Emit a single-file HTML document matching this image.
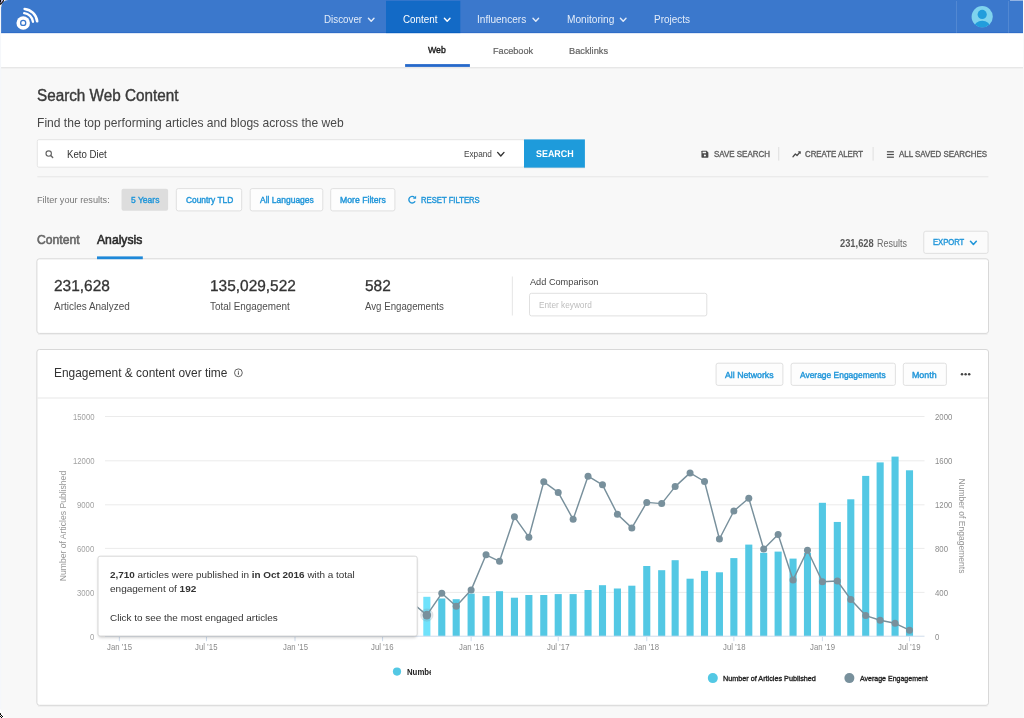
<!DOCTYPE html><html><head><meta charset="utf-8"><title>Search Web Content</title><style>

html,body{margin:0;padding:0;}
body{width:1024px;height:718px;overflow:hidden;background:#f8f8f8;font-family:"Liberation Sans",sans-serif;position:relative;}
.a{position:absolute;}
.t{position:absolute;white-space:nowrap;line-height:1;transform:translateY(-50%);transform-origin:0 50%;}
.t b{font-weight:700;}

</style></head><body>
<svg class="a" style="left:0;top:0" width="1024" height="718" viewBox="0 0 1024 718">
<defs><clipPath id="av"><circle cx="982.2" cy="16.7" r="10.6"/></clipPath><filter id="sh" x="-5%" y="-20%" width="110%" height="150%"><feGaussianBlur stdDeviation="1.6"/></filter></defs>
<rect x="0" y="0" width="1024" height="33.3" fill="#3b78cc"/>
<rect x="386" y="0.8" width="74.3" height="32.5" fill="#136ac6"/>
<rect x="0" y="32.1" width="1024" height="1.2" fill="#2f6cc8"/><rect x="386" y="32.1" width="74.3" height="1.2" fill="#0660c0"/>
<rect x="956.00" y="1.00" width="1" height="32.00" fill="rgba(255,255,255,0.12)"/>
<rect x="1008.00" y="1.00" width="1" height="32.00" fill="rgba(255,255,255,0.12)"/>
<rect x="0" y="67" width="1024" height="1" fill="#e7e7e7"/><rect x="0" y="68" width="1024" height="1" fill="#f1f1f1"/>
<rect x="0" y="33.3" width="1024" height="33.7" fill="#fff"/>
<rect x="405.1" y="64.1" width="64.8" height="2.8" fill="#2669ca"/>
<circle cx="23.2" cy="22.9" r="6.75" fill="#fff"/><circle cx="23.2" cy="22.9" r="2.55" fill="none" stroke="#3b78cc" stroke-width="1.3"/><path d="M24.2 13.15 A9.8 9.8 0 0 1 32.95 21.7" fill="none" stroke="#fff" stroke-width="2.4" stroke-linecap="round"/><path d="M24.66 8.98 A14 14 0 0 1 37.15 21.3" fill="none" stroke="#fff" stroke-width="2.6" stroke-linecap="round"/>
<circle cx="982.2" cy="16.7" r="10.6" fill="#7fd3ee"/><g clip-path="url(#av)"><circle cx="982.2" cy="14.4" r="4.6" fill="#229ddc"/><ellipse cx="982.2" cy="27.4" rx="8.2" ry="6.6" fill="#229ddc"/></g>
<path d="M368.40 18.20 L371.20 21.20 L374.00 18.20" fill="none" stroke="#e3ecf9" stroke-width="1.4" stroke-linecap="round" stroke-linejoin="round"/>
<path d="M444.40 18.20 L447.20 21.20 L450.00 18.20" fill="none" stroke="#fff" stroke-width="1.4" stroke-linecap="round" stroke-linejoin="round"/>
<path d="M533.00 18.20 L535.80 21.20 L538.60 18.20" fill="none" stroke="#e3ecf9" stroke-width="1.4" stroke-linecap="round" stroke-linejoin="round"/>
<path d="M620.40 18.20 L623.20 21.20 L626.00 18.20" fill="none" stroke="#e3ecf9" stroke-width="1.4" stroke-linecap="round" stroke-linejoin="round"/>
<rect x="37.30" y="139.70" width="487.20" height="27.50" rx="1.5" fill="#fff" stroke="#e2e2e2" stroke-width="0.9"/>
<rect x="524" y="167" width="61" height="1.3" fill="#d9dde0"/>
<rect x="524" y="139.4" width="60.9" height="28.2" fill="#1e9bdb"/>
<circle cx="48.7" cy="153.5" r="2.7" fill="none" stroke="#666" stroke-width="1.15"/><path d="M50.7 155.6 L52.7 157.6" stroke="#666" stroke-width="1.4" stroke-linecap="round"/>
<path d="M497.60 152.40 L500.80 156.00 L504.00 152.40" fill="none" stroke="#333" stroke-width="1.4" stroke-linecap="round" stroke-linejoin="round"/>
<g transform="translate(700.9,150.2) scale(0.89)"><path d="M0.6 1.3 Q0.6 0.6 1.3 0.6 L6.4 0.6 L8.4 2.6 L8.4 7.7 Q8.4 8.4 7.7 8.4 L1.3 8.4 Q0.6 8.4 0.6 7.7 Z" fill="#4a4a4a"/><rect x="1.9" y="1.7" width="3.9" height="1.7" fill="#f8f8f8"/><circle cx="4.5" cy="5.9" r="1.2" fill="#f8f8f8"/></g>
<g transform="translate(792.2,150.4) scale(0.88)"><path d="M0.9 7.2 L3.6 4.1 L5.5 5.8 L8.7 2.1" fill="none" stroke="#4a4a4a" stroke-width="1.4" stroke-linejoin="round" stroke-linecap="round"/><path d="M6.3 1.2 L9.7 1.0 L9.6 4.4 Z" fill="#4a4a4a"/></g>
<g transform="translate(886.6,150.3)"><rect x="0.3" y="0.9" width="7" height="1.2" fill="#4a4a4a"/><rect x="0.3" y="3.6" width="7" height="1.2" fill="#4a4a4a"/><rect x="0.3" y="6.3" width="7" height="1.2" fill="#4a4a4a"/></g>
<rect x="778.30" y="147.00" width="0.9" height="13.60" fill="#dcdcdc"/>
<rect x="872.65" y="147.00" width="0.9" height="13.60" fill="#dcdcdc"/>
<rect x="37.30" y="176.35" width="951.10" height="0.9" fill="#e4e4e4"/>
<rect x="121.50" y="188.70" width="46.60" height="22.10" rx="2" fill="#dddddd"/>
<rect x="176.30" y="188.60" width="65.40" height="22.30" rx="2" fill="#fdfdfd" stroke="#dcdcdc" stroke-width="0.9"/>
<rect x="250.20" y="188.60" width="72.60" height="22.30" rx="2" fill="#fdfdfd" stroke="#dcdcdc" stroke-width="0.9"/>
<rect x="330.70" y="188.60" width="64.20" height="22.30" rx="2" fill="#fdfdfd" stroke="#dcdcdc" stroke-width="0.9"/>
<g transform="translate(407.5,194.9)"><path d="M7.6 6.3 A3.3 3.3 0 1 1 7.0 2.5" fill="none" stroke="#2196d9" stroke-width="1.4"/><path d="M5.4 3.9 L8.6 3.9 L8.6 0.8 Z" fill="#2196d9"/></g>
<rect x="923.75" y="231.25" width="64.35" height="22.15" rx="2" fill="#fbfbfb" stroke="#dcdcdc" stroke-width="0.9"/>
<path d="M970.50 241.30 L973.40 244.50 L976.30 241.30" fill="none" stroke="#2196d9" stroke-width="1.6" stroke-linecap="round" stroke-linejoin="round"/>
<rect x="38.00" y="333.80" width="949.50" height="1.0" fill="#ececec"/>
<rect x="36.90" y="258.80" width="951.60" height="74.60" rx="2.5" fill="#fff" stroke="#d8d8d8" stroke-width="1.0"/>
<rect x="97" y="256.4" width="45.8" height="2.8" fill="#1e88d8"/>
<rect x="511.85" y="276.50" width="0.9" height="39.00" fill="#e2e2e2"/>
<rect x="529.50" y="293.30" width="177.30" height="22.60" rx="2" fill="#fff" stroke="#dcdcdc" stroke-width="0.9"/>
<rect x="38.00" y="705.60" width="949.50" height="1.0" fill="#ececec"/>
<rect x="36.90" y="349.50" width="951.60" height="355.80" rx="2.5" fill="#fff" stroke="#d8d8d8" stroke-width="1.0"/>
<rect x="37.40" y="397.55" width="950.60" height="0.9" fill="#e4e4e4"/>
<rect x="716.10" y="363.20" width="66.80" height="22.20" rx="2" fill="#fdfdfd" stroke="#dcdcdc" stroke-width="0.9"/>
<rect x="791.10" y="363.20" width="104.30" height="22.20" rx="2" fill="#fdfdfd" stroke="#dcdcdc" stroke-width="0.9"/>
<rect x="903.30" y="363.20" width="43.10" height="22.20" rx="2" fill="#fdfdfd" stroke="#dcdcdc" stroke-width="0.9"/>
<circle cx="962.0" cy="374.3" r="1.25" fill="#444"/>
<circle cx="965.6" cy="374.3" r="1.25" fill="#444"/>
<circle cx="969.2" cy="374.3" r="1.25" fill="#444"/>
<circle cx="238.4" cy="372.8" r="3.9" fill="none" stroke="#5a5a5a" stroke-width="0.95"/><rect x="237.9" y="372.3" width="1.0" height="2.4" fill="#444"/><rect x="237.9" y="370.8" width="1.0" height="0.9" fill="#444"/>
<rect x="105.00" y="416.00" width="819.50" height="1" fill="#ebebeb"/>
<rect x="105.00" y="460.30" width="819.50" height="1" fill="#ebebeb"/>
<rect x="105.00" y="504.30" width="819.50" height="1" fill="#ebebeb"/>
<rect x="105.00" y="547.90" width="819.50" height="1" fill="#ebebeb"/>
<rect x="105.00" y="591.90" width="819.50" height="1" fill="#ebebeb"/>
<rect x="423.30" y="596.80" width="7.1" height="39.40" fill="#6fe2fb"/>
<rect x="438.22" y="598.50" width="7.1" height="37.70" fill="#53c8e4"/>
<rect x="452.65" y="599.20" width="7.1" height="37.00" fill="#53c8e4"/>
<rect x="467.57" y="593.60" width="7.1" height="42.60" fill="#53c8e4"/>
<rect x="482.49" y="596.10" width="7.1" height="40.10" fill="#53c8e4"/>
<rect x="495.96" y="591.20" width="7.1" height="45.00" fill="#53c8e4"/>
<rect x="510.88" y="597.70" width="7.1" height="38.50" fill="#53c8e4"/>
<rect x="525.32" y="595.00" width="7.1" height="41.20" fill="#53c8e4"/>
<rect x="540.23" y="595.00" width="7.1" height="41.20" fill="#53c8e4"/>
<rect x="554.67" y="594.10" width="7.1" height="42.10" fill="#53c8e4"/>
<rect x="569.59" y="594.10" width="7.1" height="42.10" fill="#53c8e4"/>
<rect x="584.50" y="590.00" width="7.1" height="46.20" fill="#53c8e4"/>
<rect x="598.94" y="585.20" width="7.1" height="51.00" fill="#53c8e4"/>
<rect x="613.86" y="588.50" width="7.1" height="47.70" fill="#53c8e4"/>
<rect x="628.29" y="585.70" width="7.1" height="50.50" fill="#53c8e4"/>
<rect x="643.21" y="566.00" width="7.1" height="70.20" fill="#53c8e4"/>
<rect x="658.13" y="570.20" width="7.1" height="66.00" fill="#53c8e4"/>
<rect x="671.60" y="560.20" width="7.1" height="76.00" fill="#53c8e4"/>
<rect x="686.52" y="578.70" width="7.1" height="57.50" fill="#53c8e4"/>
<rect x="700.96" y="570.90" width="7.1" height="65.30" fill="#53c8e4"/>
<rect x="715.87" y="572.30" width="7.1" height="63.90" fill="#53c8e4"/>
<rect x="730.31" y="558.10" width="7.1" height="78.10" fill="#53c8e4"/>
<rect x="745.23" y="544.60" width="7.1" height="91.60" fill="#53c8e4"/>
<rect x="760.14" y="552.80" width="7.1" height="83.40" fill="#53c8e4"/>
<rect x="774.58" y="551.60" width="7.1" height="84.60" fill="#53c8e4"/>
<rect x="789.50" y="558.60" width="7.1" height="77.60" fill="#53c8e4"/>
<rect x="803.93" y="553.00" width="7.1" height="83.20" fill="#53c8e4"/>
<rect x="818.85" y="502.80" width="7.1" height="133.40" fill="#53c8e4"/>
<rect x="833.77" y="521.95" width="7.1" height="114.25" fill="#53c8e4"/>
<rect x="847.24" y="499.30" width="7.1" height="136.90" fill="#53c8e4"/>
<rect x="862.16" y="475.90" width="7.1" height="160.30" fill="#53c8e4"/>
<rect x="876.60" y="462.40" width="7.1" height="173.80" fill="#53c8e4"/>
<rect x="891.51" y="456.60" width="7.1" height="179.60" fill="#53c8e4"/>
<rect x="905.95" y="470.30" width="7.1" height="165.90" fill="#53c8e4"/>
<rect x="105.00" y="635.70" width="819.50" height="1" fill="#cfdcec"/>
<rect x="118.86" y="636.70" width="1" height="4.50" fill="#cfdcec"/>
<rect x="205.96" y="636.70" width="1" height="4.50" fill="#cfdcec"/>
<rect x="294.50" y="636.70" width="1" height="4.50" fill="#cfdcec"/>
<rect x="382.08" y="636.70" width="1" height="4.50" fill="#cfdcec"/>
<rect x="470.62" y="636.70" width="1" height="4.50" fill="#cfdcec"/>
<rect x="557.72" y="636.70" width="1" height="4.50" fill="#cfdcec"/>
<rect x="646.26" y="636.70" width="1" height="4.50" fill="#cfdcec"/>
<rect x="733.36" y="636.70" width="1" height="4.50" fill="#cfdcec"/>
<rect x="821.90" y="636.70" width="1" height="4.50" fill="#cfdcec"/>
<rect x="909.00" y="636.70" width="1" height="4.50" fill="#cfdcec"/>
<path d="M412.41 603.00 L426.85 615.10 L441.77 593.30 L456.20 606.30 L471.12 590.10 L486.04 554.80 L499.51 561.30 L514.43 516.80 L528.87 537.20 L543.78 481.80 L558.22 492.40 L573.14 519.30 L588.05 476.20 L602.49 484.80 L617.41 514.20 L631.84 527.90 L646.76 502.40 L661.68 503.60 L675.15 486.60 L690.07 472.90 L704.51 481.50 L719.42 539.00 L733.86 511.00 L748.78 498.20 L763.69 549.10 L778.13 534.60 L793.05 579.90 L807.48 550.20 L822.40 581.80 L837.32 581.00 L850.79 599.40 L865.71 615.60 L880.15 620.20 L895.06 623.30 L909.50 630.20" fill="none" stroke="#78909c" stroke-width="1.45" stroke-linejoin="round"/>
<circle cx="426.85" cy="615.10" r="6.2" fill="#78909c" fill-opacity="0.18" stroke="#78909c" stroke-opacity="0.35" stroke-width="0.5"/>
<circle cx="426.85" cy="615.10" r="4.3" fill="#78909c"/>
<circle cx="441.77" cy="593.30" r="3.5" fill="#78909c"/>
<circle cx="456.20" cy="606.30" r="3.5" fill="#78909c"/>
<circle cx="471.12" cy="590.10" r="3.5" fill="#78909c"/>
<circle cx="486.04" cy="554.80" r="3.5" fill="#78909c"/>
<circle cx="499.51" cy="561.30" r="3.5" fill="#78909c"/>
<circle cx="514.43" cy="516.80" r="3.5" fill="#78909c"/>
<circle cx="528.87" cy="537.20" r="3.5" fill="#78909c"/>
<circle cx="543.78" cy="481.80" r="3.5" fill="#78909c"/>
<circle cx="558.22" cy="492.40" r="3.5" fill="#78909c"/>
<circle cx="573.14" cy="519.30" r="3.5" fill="#78909c"/>
<circle cx="588.05" cy="476.20" r="3.5" fill="#78909c"/>
<circle cx="602.49" cy="484.80" r="3.5" fill="#78909c"/>
<circle cx="617.41" cy="514.20" r="3.5" fill="#78909c"/>
<circle cx="631.84" cy="527.90" r="3.5" fill="#78909c"/>
<circle cx="646.76" cy="502.40" r="3.5" fill="#78909c"/>
<circle cx="661.68" cy="503.60" r="3.5" fill="#78909c"/>
<circle cx="675.15" cy="486.60" r="3.5" fill="#78909c"/>
<circle cx="690.07" cy="472.90" r="3.5" fill="#78909c"/>
<circle cx="704.51" cy="481.50" r="3.5" fill="#78909c"/>
<circle cx="719.42" cy="539.00" r="3.5" fill="#78909c"/>
<circle cx="733.86" cy="511.00" r="3.5" fill="#78909c"/>
<circle cx="748.78" cy="498.20" r="3.5" fill="#78909c"/>
<circle cx="763.69" cy="549.10" r="3.5" fill="#78909c"/>
<circle cx="778.13" cy="534.60" r="3.5" fill="#78909c"/>
<circle cx="793.05" cy="579.90" r="3.5" fill="#78909c"/>
<circle cx="807.48" cy="550.20" r="3.5" fill="#78909c"/>
<circle cx="822.40" cy="581.80" r="3.5" fill="#78909c"/>
<circle cx="837.32" cy="581.00" r="3.5" fill="#78909c"/>
<circle cx="850.79" cy="599.40" r="3.5" fill="#78909c"/>
<circle cx="865.71" cy="615.60" r="3.5" fill="#78909c"/>
<circle cx="880.15" cy="620.20" r="3.5" fill="#78909c"/>
<circle cx="895.06" cy="623.30" r="3.5" fill="#78909c"/>
<circle cx="909.50" cy="630.20" r="3.5" fill="#78909c"/>
<rect x="98.5" y="558" width="318" height="79.5" rx="2" fill="#000" opacity="0.22" filter="url(#sh)"/>
<rect x="98.00" y="556.20" width="319.20" height="79.80" rx="2" fill="#fff" stroke="#d4d4d4" stroke-width="0.9"/>
<circle cx="397" cy="671.6" r="4.1" fill="#53c8e4"/>
<circle cx="712.8" cy="678.1" r="5" fill="#53c8e4"/>
<circle cx="849.4" cy="678.1" r="5" fill="#78909c"/>
<rect x="0" y="5" width="1.1" height="713" fill="#f5f7fb"/>
<rect x="1023" y="0" width="1" height="718" fill="#fafafa"/>
<path d="M0 0 L8.4 0 A7.2 7.2 0 0 0 1.1 7.2 L0 7.2 Z" fill="#fbf7f0"/><path d="M0 0 L4 0 L3.7 1.4 L1.7 3.7 L0.9 4.7 L0 4.7 Z" fill="#050505"/><path d="M1.3 0 L2.9 0 L2.6 1.1 L1.5 2.5 L0 3.4 L0 2.7 L1.0 2.2 Z" fill="#cfc6ff"/><path d="M1.5 0 L2.7 0 L2.0 1.0 Z" fill="#fff"/>
<rect x="1010" y="0" width="13" height="0.7" fill="#b9cdec"/>
<path d="M0 709.6 L1.2 709.6 A7.2 7.2 0 0 0 7.6 718 L0 718 Z" fill="#fdfdfd"/><rect x="0" y="713.2" width="1" height="1.9" fill="#000"/><rect x="1" y="715" width="1" height="1" fill="#000"/><rect x="0" y="716" width="1" height="1" fill="#000"/><rect x="2" y="716" width="1" height="1" fill="#000"/><rect x="1" y="717" width="1" height="1" fill="#000"/>
</svg>
<div id="txt" style="position:absolute;left:0;top:0;width:1024px;height:718px;will-change:transform;">
<div class="t" style="left:62.8px;top:526px;font-size:8.6px;color:#979797;transform-origin:50% 50%;transform:translate(-50%,-50%) rotate(-90deg) scaleX(1.0);">Number of Articles Published</div>
<div class="t" style="left:962.4px;top:526.2px;font-size:8.6px;color:#979797;transform-origin:50% 50%;transform:translate(-50%,-50%) rotate(90deg) scaleX(0.995);">Number of Engagements</div>
<div class="a" style="left:406.6px;top:664px;width:24.6px;height:16px;overflow:hidden;"><div class="t" style="left:0;top:8.2px;font-size:8.8px;font-weight:700;color:#222;transform:translateY(-50%) scaleX(0.885);">Number</div></div>
<span class="t" id="t0" style="left:324.00px;top:20.00px;font-size:10px;font-weight:400;color:#e3ecf9;transform:translateY(-50%) scaleX(0.9793);">Discover</span>
<span class="t" id="t1" style="left:402.90px;top:20.00px;font-size:10px;font-weight:400;color:#ffffff;transform:translateY(-50%) scaleX(0.9820);">Content</span>
<span class="t" id="t2" style="left:477.30px;top:20.00px;font-size:10px;font-weight:400;color:#e3ecf9;transform:translateY(-50%) scaleX(1.0057);">Influencers</span>
<span class="t" id="t3" style="left:566.70px;top:20.00px;font-size:10px;font-weight:400;color:#e3ecf9;transform:translateY(-50%) scaleX(1.0149);">Monitoring</span>
<span class="t" id="t4" style="left:654.30px;top:20.00px;font-size:10px;font-weight:400;color:#e3ecf9;transform:translateY(-50%) scaleX(0.9965);">Projects</span>
<span class="t" id="t5" style="left:428.30px;top:50.20px;font-size:9.4px;font-weight:400;color:#222;transform:translateY(-50%) scaleX(0.9315);-webkit-text-stroke:0.43px #222;">Web</span>
<span class="t" id="t6" style="left:492.50px;top:51.40px;font-size:9.5px;font-weight:400;color:#626262;transform:translateY(-50%) scaleX(0.9608);-webkit-text-stroke:0.2px #626262;">Facebook</span>
<span class="t" id="t7" style="left:568.50px;top:51.40px;font-size:9.5px;font-weight:400;color:#626262;transform:translateY(-50%) scaleX(0.9720);-webkit-text-stroke:0.2px #626262;">Backlinks</span>
<span class="t" id="t8" style="left:37.30px;top:96.20px;font-size:16px;font-weight:400;color:#3a3a3a;transform:translateY(-50%) scaleX(0.9539);-webkit-text-stroke:0.4px #3a3a3a;">Search Web Content</span>
<span class="t" id="t9" style="left:37.30px;top:123.20px;font-size:12.8px;font-weight:400;color:#484848;transform:translateY(-50%) scaleX(0.9435);">Find the top performing articles and blogs across the web</span>
<span class="t" id="t10" style="left:66.50px;top:154.50px;font-size:10.4px;font-weight:400;color:#333;transform:translateY(-50%) scaleX(0.9310);">Keto Diet</span>
<span class="t" id="t11" style="left:464.20px;top:154.20px;font-size:8.8px;font-weight:400;color:#444;transform:translateY(-50%) scaleX(0.9349);">Expand</span>
<span class="t" id="t12" style="left:535.70px;top:154.90px;font-size:9.8px;font-weight:700;color:#fff;transform:translateY(-50%) scaleX(0.9112);text-rendering:geometricPrecision;">SEARCH</span>
<span class="t" id="t13" style="left:713.75px;top:154.30px;font-size:8.6px;font-weight:400;color:#5e5e5e;transform:translateY(-50%) scaleX(0.9248);-webkit-text-stroke:0.36px #5e5e5e;">SAVE SEARCH</span>
<span class="t" id="t14" style="left:805.30px;top:154.30px;font-size:8.6px;font-weight:400;color:#5e5e5e;transform:translateY(-50%) scaleX(0.9123);-webkit-text-stroke:0.36px #5e5e5e;">CREATE ALERT</span>
<span class="t" id="t15" style="left:899.40px;top:154.30px;font-size:8.6px;font-weight:400;color:#5e5e5e;transform:translateY(-50%) scaleX(0.9222);-webkit-text-stroke:0.36px #5e5e5e;">ALL SAVED SEARCHES</span>
<span class="t" id="t16" style="left:37.30px;top:200.60px;font-size:9.3px;font-weight:400;color:#777;transform:translateY(-50%) scaleX(0.9839);">Filter your results:</span>
<span class="t" id="t17" style="left:130.60px;top:199.80px;font-size:8.8px;font-weight:400;color:#2196d9;transform:translateY(-50%) scaleX(0.9673);-webkit-text-stroke:0.40px #2196d9;">5 Years</span>
<span class="t" id="t18" style="left:185.50px;top:199.80px;font-size:8.8px;font-weight:400;color:#2196d9;transform:translateY(-50%) scaleX(0.9514);-webkit-text-stroke:0.40px #2196d9;">Country TLD</span>
<span class="t" id="t19" style="left:259.60px;top:199.80px;font-size:8.8px;font-weight:400;color:#2196d9;transform:translateY(-50%) scaleX(0.9648);-webkit-text-stroke:0.40px #2196d9;">All Languages</span>
<span class="t" id="t20" style="left:340.00px;top:199.80px;font-size:8.8px;font-weight:400;color:#2196d9;transform:translateY(-50%) scaleX(0.9863);-webkit-text-stroke:0.40px #2196d9;">More Filters</span>
<span class="t" id="t21" style="left:420.80px;top:199.80px;font-size:8.4px;font-weight:400;color:#2196d9;transform:translateY(-50%) scaleX(0.9183);-webkit-text-stroke:0.39px #2196d9;">RESET FILTERS</span>
<span class="t" id="t22" style="left:37.30px;top:239.60px;font-size:12.8px;font-weight:400;color:#666;transform:translateY(-50%) scaleX(0.9525);-webkit-text-stroke:0.59px #666;">Content</span>
<span class="t" id="t23" style="left:97.30px;top:239.60px;font-size:12.8px;font-weight:400;color:#2b2b2b;transform:translateY(-50%) scaleX(0.9506);-webkit-text-stroke:0.59px #2b2b2b;">Analysis</span>
<span class="t" id="t24" style="left:840.30px;top:243.70px;font-size:10px;font-weight:700;color:#5a5a5a;transform:translateY(-50%) scaleX(0.9321);">231,628</span>
<span class="t" id="t25" style="left:876.70px;top:243.70px;font-size:10px;font-weight:400;color:#6a6a6a;transform:translateY(-50%) scaleX(0.8963);">Results</span>
<span class="t" id="t26" style="left:933.10px;top:241.90px;font-size:8.6px;font-weight:400;color:#2196d9;transform:translateY(-50%) scaleX(0.8895);-webkit-text-stroke:0.40px #2196d9;">EXPORT</span>
<span class="t" id="t27" style="left:54.40px;top:286.80px;font-size:15.8px;font-weight:400;color:#333;transform:translateY(-50%) scaleX(0.9788);-webkit-text-stroke:0.3px #333;text-rendering:geometricPrecision;">231,628</span>
<span class="t" id="t28" style="left:54.40px;top:306.70px;font-size:10.3px;font-weight:400;color:#4e4e4e;transform:translateY(-50%) scaleX(0.9678);">Articles Analyzed</span>
<span class="t" id="t29" style="left:210.00px;top:286.80px;font-size:15.8px;font-weight:400;color:#333;transform:translateY(-50%) scaleX(0.9777);-webkit-text-stroke:0.3px #333;text-rendering:geometricPrecision;">135,029,522</span>
<span class="t" id="t30" style="left:210.00px;top:306.70px;font-size:10.3px;font-weight:400;color:#4e4e4e;transform:translateY(-50%) scaleX(0.9601);">Total Engagement</span>
<span class="t" id="t31" style="left:365.40px;top:286.80px;font-size:15.8px;font-weight:400;color:#333;transform:translateY(-50%) scaleX(0.9788);-webkit-text-stroke:0.3px #333;text-rendering:geometricPrecision;">582</span>
<span class="t" id="t32" style="left:365.40px;top:306.70px;font-size:10.3px;font-weight:400;color:#4e4e4e;transform:translateY(-50%) scaleX(0.9396);">Avg Engagements</span>
<span class="t" id="t33" style="left:529.80px;top:281.80px;font-size:9.8px;font-weight:400;color:#444;transform:translateY(-50%) scaleX(0.9372);">Add Comparison</span>
<span class="t" id="t34" style="left:539.20px;top:304.80px;font-size:8.8px;font-weight:400;color:#bdbdbd;transform:translateY(-50%) scaleX(0.9389);">Enter keyword</span>
<span class="t" id="t35" style="left:54.40px;top:373.10px;font-size:12.6px;font-weight:400;color:#333;transform:translateY(-50%) scaleX(0.9454);">Engagement &amp; content over time</span>
<span class="t" id="t36" style="left:724.90px;top:374.80px;font-size:8.8px;font-weight:400;color:#2196d9;transform:translateY(-50%) scaleX(0.9941);-webkit-text-stroke:0.40px #2196d9;text-rendering:geometricPrecision;">All Networks</span>
<span class="t" id="t37" style="left:800.20px;top:374.80px;font-size:8.8px;font-weight:400;color:#2196d9;transform:translateY(-50%) scaleX(0.9581);-webkit-text-stroke:0.40px #2196d9;text-rendering:geometricPrecision;">Average Engagements</span>
<span class="t" id="t38" style="left:912.40px;top:374.80px;font-size:8.8px;font-weight:400;color:#2196d9;transform:translateY(-50%) scaleX(1.0060);-webkit-text-stroke:0.40px #2196d9;text-rendering:geometricPrecision;">Month</span>
<span class="t" id="t39" style="left:72.80px;top:418.40px;font-size:8.2px;font-weight:400;color:#a2a2a2;transform:translateY(-50%) scaleX(0.9438);">15000</span>
<span class="t" id="t40" style="left:72.80px;top:462.00px;font-size:8.2px;font-weight:400;color:#a2a2a2;transform:translateY(-50%) scaleX(0.9438);">12000</span>
<span class="t" id="t41" style="left:77.10px;top:506.00px;font-size:8.2px;font-weight:400;color:#a2a2a2;transform:translateY(-50%) scaleX(0.9441);">9000</span>
<span class="t" id="t42" style="left:77.10px;top:550.40px;font-size:8.2px;font-weight:400;color:#a2a2a2;transform:translateY(-50%) scaleX(0.9441);">6000</span>
<span class="t" id="t43" style="left:77.10px;top:594.40px;font-size:8.2px;font-weight:400;color:#a2a2a2;transform:translateY(-50%) scaleX(0.9441);">3000</span>
<span class="t" id="t44" style="left:90.00px;top:638.20px;font-size:8.2px;font-weight:400;color:#a2a2a2;transform:translateY(-50%) scaleX(0.9425);">0</span>
<span class="t" id="t45" style="left:935.30px;top:418.40px;font-size:8.2px;font-weight:400;color:#8c8c8c;transform:translateY(-50%) scaleX(0.9496);">2000</span>
<span class="t" id="t46" style="left:935.30px;top:462.00px;font-size:8.2px;font-weight:400;color:#8c8c8c;transform:translateY(-50%) scaleX(0.9496);">1600</span>
<span class="t" id="t47" style="left:935.30px;top:506.00px;font-size:8.2px;font-weight:400;color:#8c8c8c;transform:translateY(-50%) scaleX(0.9496);">1200</span>
<span class="t" id="t48" style="left:935.30px;top:550.40px;font-size:8.2px;font-weight:400;color:#8c8c8c;transform:translateY(-50%) scaleX(0.9509);">800</span>
<span class="t" id="t49" style="left:935.30px;top:594.40px;font-size:8.2px;font-weight:400;color:#8c8c8c;transform:translateY(-50%) scaleX(0.9509);">400</span>
<span class="t" id="t50" style="left:935.30px;top:638.20px;font-size:8.2px;font-weight:400;color:#8c8c8c;transform:translateY(-50%) scaleX(0.9425);">0</span>
<span class="t" id="t51" style="left:106.86px;top:647.40px;font-size:8.4px;font-weight:400;color:#8a8a8a;transform:translateY(-50%) scaleX(0.9254);">Jan &rsquo;15</span>
<span class="t" id="t52" style="left:195.21px;top:647.40px;font-size:8.4px;font-weight:400;color:#8a8a8a;transform:translateY(-50%) scaleX(0.9290);">Jul &rsquo;15</span>
<span class="t" id="t53" style="left:282.50px;top:647.40px;font-size:8.4px;font-weight:400;color:#8a8a8a;transform:translateY(-50%) scaleX(0.9254);">Jan &rsquo;15</span>
<span class="t" id="t54" style="left:371.33px;top:647.40px;font-size:8.4px;font-weight:400;color:#8a8a8a;transform:translateY(-50%) scaleX(0.9290);">Jul &rsquo;16</span>
<span class="t" id="t55" style="left:458.62px;top:647.40px;font-size:8.4px;font-weight:400;color:#8a8a8a;transform:translateY(-50%) scaleX(0.9254);">Jan &rsquo;16</span>
<span class="t" id="t56" style="left:546.97px;top:647.40px;font-size:8.4px;font-weight:400;color:#8a8a8a;transform:translateY(-50%) scaleX(0.9290);">Jul &rsquo;17</span>
<span class="t" id="t57" style="left:634.26px;top:647.40px;font-size:8.4px;font-weight:400;color:#8a8a8a;transform:translateY(-50%) scaleX(0.9254);">Jan &rsquo;18</span>
<span class="t" id="t58" style="left:722.61px;top:647.40px;font-size:8.4px;font-weight:400;color:#8a8a8a;transform:translateY(-50%) scaleX(0.9290);">Jul &rsquo;18</span>
<span class="t" id="t59" style="left:809.90px;top:647.40px;font-size:8.4px;font-weight:400;color:#8a8a8a;transform:translateY(-50%) scaleX(0.9254);">Jan &rsquo;19</span>
<span class="t" id="t60" style="left:898.25px;top:647.40px;font-size:8.4px;font-weight:400;color:#8a8a8a;transform:translateY(-50%) scaleX(0.9290);">Jul &rsquo;19</span>
<span class="t" id="t61" style="left:109.70px;top:575.20px;font-size:9.6px;font-weight:400;color:#333;transform:translateY(-50%) scaleX(1.0337);"><b>2,710</b> articles were published in <b>in Oct 2016</b> with a total</span>
<span class="t" id="t62" style="left:109.70px;top:589.40px;font-size:9.6px;font-weight:400;color:#333;transform:translateY(-50%) scaleX(1.0435);">engagement of <b>192</b></span>
<span class="t" id="t63" style="left:109.70px;top:617.80px;font-size:9.6px;font-weight:400;color:#333;transform:translateY(-50%) scaleX(1.0350);">Click to see the most engaged articles</span>
<span class="t" id="t64" style="left:723.40px;top:678.90px;font-size:7.6px;font-weight:400;color:#222;transform:translateY(-50%) scaleX(0.9523);-webkit-text-stroke:0.35px #222;">Number of Articles Published</span>
<span class="t" id="t65" style="left:860.00px;top:678.90px;font-size:7.6px;font-weight:400;color:#222;transform:translateY(-50%) scaleX(0.9246);-webkit-text-stroke:0.35px #222;">Average Engagement</span>
</div>
</body></html>
